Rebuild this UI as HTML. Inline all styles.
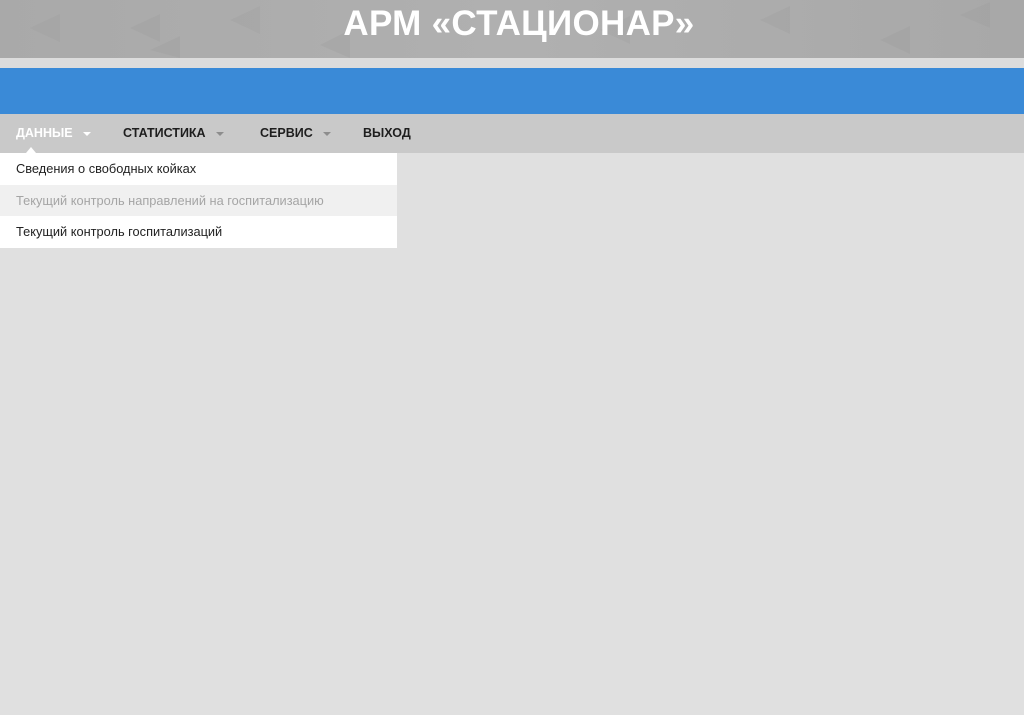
<!DOCTYPE html>
<html><head><meta charset="utf-8"><style>
*{margin:0;padding:0;box-sizing:border-box}
body{width:1024px;height:715px;overflow:hidden;background:#e0e0e0;font-family:"Liberation Sans",Arial,sans-serif;position:relative}
#hdr{position:absolute;left:0;top:0;width:1024px;height:58px;background:linear-gradient(90deg,#a9a9a9,#b0b0b0 50%,#a8a8a8);overflow:hidden}
#hdr svg{position:absolute;left:0;top:0}
#title{position:absolute;left:0;width:1038px;top:4px;text-align:center;color:#fff;font-weight:bold;font-size:35px;letter-spacing:0.3px}
#strip{position:absolute;top:58px;left:0;width:1024px;height:10px;background:#dcdcdc}
#blue{position:absolute;top:68px;left:0;width:1024px;height:46px;background:#3a8ad7}
#nav{position:absolute;top:114px;left:0;width:1024px;height:39px;background:#c9c9c9}
.ni{position:absolute;top:12px;font-size:12.5px;font-weight:bold;color:#1e1e1e}
.car{display:inline-block;width:0;height:0;border-left:4px solid transparent;border-right:4px solid transparent;border-top:4px solid #8d8d8d;vertical-align:middle;margin-left:10px}
#dd{position:absolute;top:153px;left:0;width:397px;height:95px;background:#fff}
.r{height:31.6px;line-height:31px;padding-left:16px;font-size:12.8px;color:#222}
</style></head><body>
<div id="hdr"><svg width="1024" height="58">
<g fill="#9a9a9a" opacity="0.25">
<polygon points="30,28 60,14 60,42"/><polygon points="130,28 160,14 160,42"/><polygon points="150,50 180,36 180,58"/><polygon points="230,20 260,6 260,34"/><polygon points="320,45 350,30 350,58"/><polygon points="600,30 630,16 630,44"/><polygon points="760,20 790,6 790,34"/><polygon points="880,40 910,26 910,54"/><polygon points="960,15 990,2 990,28"/>
</g></svg>
<div id="title">АРМ «СТАЦИОНАР»</div></div>
<div id="strip"></div><div id="blue"></div>
<div id="nav">
<span class="ni" style="left:16px;color:#fff">ДАННЫЕ<span class="car" style="border-top-color:#fff"></span></span>
<span class="ni" style="left:123px">СТАТИСТИКА<span class="car"></span></span>
<span class="ni" style="left:260px">СЕРВИС<span class="car"></span></span>
<span class="ni" style="left:363px">ВЫХОД</span>
<div style="position:absolute;left:26px;top:33px;width:0;height:0;border-left:5px solid transparent;border-right:5px solid transparent;border-bottom:6px solid #fff"></div>
</div>
<div id="dd">
<div class="r">Сведения о свободных койках</div>
<div class="r" style="background:#f0f0f0;color:#a5a5a5">Текущий контроль направлений на госпитализацию</div>
<div class="r">Текущий контроль госпитализаций</div>
</div>
</body></html>
